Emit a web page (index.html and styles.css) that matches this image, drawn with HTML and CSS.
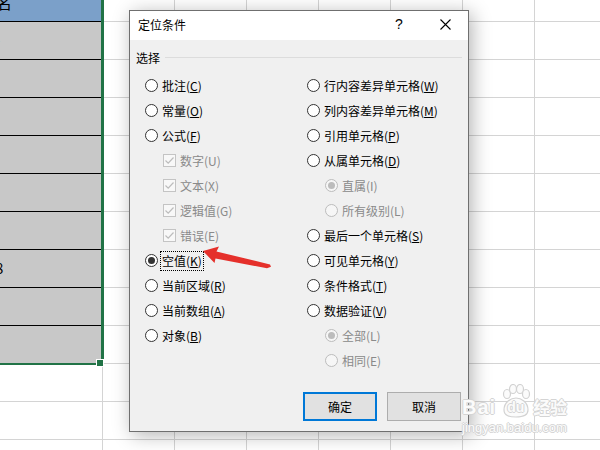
FILE: index.html
```html
<!DOCTYPE html>
<html lang="zh-CN">
<head>
    <meta charset="UTF-8">
    <title>定位条件</title>
    <link rel="stylesheet" href="styles.css">
</head>
<body>
    <div class="sheet">
        <div class="col-a">
            <div class="sel">
                <div class="a-head"><span>名</span></div>
                <div class="a-cell"><span>-</span></div>
                <div class="a-cell"></div>
                <div class="a-cell"></div>
                <div class="a-cell"></div>
                <div class="a-cell"></div>
                <div class="a-cell"></div>
                <div class="a-cell"><span>8</span></div>
                <div class="a-cell"></div>
                <div class="a-cell"></div>
            </div>
        </div>
        <div class="cols"></div>

        <div class="dialog">
            <div class="title-bar">
                <div class="title">定位条件</div>
                <div class="tb-btn help">?</div>
                <div class="tb-btn">
                    <svg width="11" height="11" viewBox="0 0 11 11"><path d="M0.5 0.5 L10.5 10.5 M10.5 0.5 L0.5 10.5" stroke="#000" stroke-width="1.1" fill="none"/></svg>
                </div>
            </div>
            <div class="body">
                <div class="group-head">选择</div>
                <div class="opts">
                    <div class="opt-col left">
                        <div class="opt"><i class="radio"></i><span>批注(<u>C</u>)</span></div>
                        <div class="opt"><i class="radio"></i><span>常量(<u>O</u>)</span></div>
                        <div class="opt"><i class="radio"></i><span>公式(<u>F</u>)</span></div>
                        <div class="opt sub off"><i class="check"><svg width="11" height="11" viewBox="0 0 11 11"><path d="M1.5 5.5 L4.2 8.2 L9.5 2.5" stroke="#bcbcbc" stroke-width="1.2" fill="none"/></svg></i><span>数字(U)</span></div>
                        <div class="opt sub off"><i class="check"><svg width="11" height="11" viewBox="0 0 11 11"><path d="M1.5 5.5 L4.2 8.2 L9.5 2.5" stroke="#bcbcbc" stroke-width="1.2" fill="none"/></svg></i><span>文本(X)</span></div>
                        <div class="opt sub off"><i class="check"><svg width="11" height="11" viewBox="0 0 11 11"><path d="M1.5 5.5 L4.2 8.2 L9.5 2.5" stroke="#bcbcbc" stroke-width="1.2" fill="none"/></svg></i><span>逻辑值(G)</span></div>
                        <div class="opt sub off"><i class="check"><svg width="11" height="11" viewBox="0 0 11 11"><path d="M1.5 5.5 L4.2 8.2 L9.5 2.5" stroke="#bcbcbc" stroke-width="1.2" fill="none"/></svg></i><span>错误(E)</span></div>
                        <div class="opt"><i class="radio on"></i><span class="focus">空值(<u>K</u>)</span></div>
                        <div class="opt"><i class="radio"></i><span>当前区域(<u>R</u>)</span></div>
                        <div class="opt"><i class="radio"></i><span>当前数组(<u>A</u>)</span></div>
                        <div class="opt"><i class="radio"></i><span>对象(<u>B</u>)</span></div>
                    </div>
                    <div class="opt-col">
                        <div class="opt"><i class="radio"></i><span>行内容差异单元格(<u>W</u>)</span></div>
                        <div class="opt"><i class="radio"></i><span>列内容差异单元格(<u>M</u>)</span></div>
                        <div class="opt"><i class="radio"></i><span>引用单元格(<u>P</u>)</span></div>
                        <div class="opt"><i class="radio"></i><span>从属单元格(<u>D</u>)</span></div>
                        <div class="opt sub off"><i class="radio on"></i><span>直属(I)</span></div>
                        <div class="opt sub off"><i class="radio"></i><span>所有级别(L)</span></div>
                        <div class="opt"><i class="radio"></i><span>最后一个单元格(<u>S</u>)</span></div>
                        <div class="opt"><i class="radio"></i><span>可见单元格(<u>Y</u>)</span></div>
                        <div class="opt"><i class="radio"></i><span>条件格式(<u>T</u>)</span></div>
                        <div class="opt"><i class="radio"></i><span>数据验证(<u>V</u>)</span></div>
                        <div class="opt sub off"><i class="radio on"></i><span>全部(L)</span></div>
                        <div class="opt sub off"><i class="radio"></i><span>相同(E)</span></div>
                    </div>
                </div>
                <div class="foot">
                    <div class="btn default">确定</div>
                    <div class="btn">取消</div>
                </div>
            </div>
        </div>

        <!-- annotation arrow -->
        <svg class="arrow" width="600" height="450" viewBox="0 0 600 450">
            <polygon points="203,251 219,246.5 216.5,251.5 270,264.5 271,266.8 267,268.2 215.5,258.5 214.5,263" fill="#e5302b"/>
        </svg>

        <div class="watermark">
            <div class="wm-row">
                <span class="wm-bai">Bai</span>
                <span class="wm-paw">
                    <svg width="34" height="34" viewBox="0 0 34 34">
                        <g fill="#fbfbfb" stroke="#d2d2d2" stroke-width="1.2">
                            <ellipse cx="8" cy="10" rx="3.5" ry="4.5"/>
                            <ellipse cx="14" cy="5" rx="3.5" ry="4.5"/>
                            <ellipse cx="21" cy="5" rx="3.5" ry="4.5"/>
                            <ellipse cx="27" cy="10" rx="3.5" ry="4.5"/>
                            <path d="M5 26 C5 18 12 14 17 14 C22 14 29 18 29 26 C29 32 23 33 17 33 C11 33 5 32 5 26 Z"/>
                        </g>
                    </svg>
                    <span class="wm-du">du</span>
                </span>
                <span class="wm-jy">经验</span>
            </div>
            <div class="wm-url">jingyan.baidu.com</div>
        </div>
    </div>
</body>
</html>
```

FILE: styles.css
```css
body {
    margin: 0;
    padding: 0;
    background-color: #fff;
    font-family: "Noto Sans CJK SC", "Liberation Sans", sans-serif;
}

.sheet {
    position: relative;
    width: 600px;
    height: 450px;
    display: flex;
    overflow: hidden;
}

/* spreadsheet grid */
.col-a {
    width: 104px;
    flex: none;
    background:
        linear-gradient(to right, transparent 102px, #d4d4d4 102px, #d4d4d4 103px, transparent 103px),
        linear-gradient(to bottom, transparent 21px, #d4d4d4 21px, #d4d4d4 22px, transparent 22px) 0 0 / 100% 38px,
        #fff;
}

.cols {
    flex: 1;
    background:
        linear-gradient(to right, transparent 70px, #d4d4d4 70px, #d4d4d4 71px, transparent 71px) 0 0 / 72px 100%,
        linear-gradient(to bottom, transparent 21px, #d4d4d4 21px, #d4d4d4 22px, transparent 22px) 0 0 / 100% 38px,
        #fff;
}

.sel {
    position: relative;
    width: 104px;
    box-sizing: border-box;
    background-color: #c8c8c8;
    border-right: 3px solid #217346;
    border-bottom: 2px solid #217346;
}

.sel::after {
    content: "";
    position: absolute;
    right: -3px;
    bottom: -4px;
    width: 6px;
    height: 6px;
    background-color: #217346;
    border: 1px solid #fff;
}

.a-head {
    height: 21px;
    background-color: #7ba0c9;
    overflow: hidden;
    font-size: 16px;
    line-height: 16px;
}

.a-head span {
    display: block;
    margin: -6px 0 0 -4px;
}

.a-cell {
    height: 38px;
    box-sizing: border-box;
    border-top: 1px solid #000;
    font-size: 15px;
    line-height: 36px;
    overflow: hidden;
}

.a-cell span {
    display: block;
    margin-left: -5px;
}

/* dialog */
.dialog {
    position: absolute;
    left: 129px;
    top: 10px;
    width: 340px;
    height: 422px;
    box-sizing: border-box;
    border: 1px solid #6f6f6f;
    background-color: #f0f0f0;
    display: flex;
    flex-direction: column;
    box-shadow: 3px 3px 18px rgba(0,0,0,0.3);
    font-size: 12px;
    line-height: 16px;
    color: #000;
}

.title-bar {
    height: 29px;
    background-color: #fff;
    display: flex;
    align-items: center;
}

.title {
    flex: 1;
    padding-left: 8px;
    margin-top: -2px;
}

.tb-btn {
    width: 46px;
    height: 29px;
    display: flex;
    align-items: center;
    justify-content: center;
    margin-top: -3px;
}

.tb-btn.help {
    font-family: "Liberation Sans", sans-serif;
    font-size: 14px;
}

.body {
    flex: 1;
    display: flex;
    flex-direction: column;
    padding: 10px 6px 10px 6px;
}

.group-head {
    display: flex;
    align-items: center;
    gap: 5px;
}

.group-head::after {
    content: "";
    flex: 1;
    border-top: 1px solid #dcdcdc;
    margin-top: -1px;
}

.opts {
    display: flex;
    margin-top: 7px;
    padding-left: 9px;
}

.opt-col.left {
    width: 162px;
}

.opt {
    height: 25px;
    display: flex;
    align-items: center;
    white-space: nowrap;
}

.opt.sub {
    padding-left: 18px;
}

.opt.off {
    color: #8a8a8a;
}

.radio {
    width: 13px;
    height: 13px;
    box-sizing: border-box;
    border: 1px solid #333;
    border-radius: 50%;
    background-color: #fff;
    margin-right: 4px;
    flex: none;
    display: flex;
    align-items: center;
    justify-content: center;
}

.radio.on::after {
    content: "";
    width: 7px;
    height: 7px;
    border-radius: 50%;
    background-color: #333;
}

.off .radio {
    border-color: #bcbcbc;
    background-color: #f6f6f6;
}

.off .radio.on::after {
    background-color: #bcbcbc;
}

.check {
    width: 13px;
    height: 13px;
    box-sizing: border-box;
    border: 1px solid #c4c4c4;
    background-color: #f8f8f8;
    margin-right: 4px;
    flex: none;
    display: flex;
    align-items: center;
    justify-content: center;
}

.focus {
    outline: 1px dotted #000;
    outline-offset: 1px;
}

.foot {
    margin-top: auto;
    display: flex;
    justify-content: flex-end;
    gap: 10px;
    padding-right: 1px;
}

.btn {
    width: 74px;
    height: 29px;
    box-sizing: border-box;
    border: 1px solid #adadad;
    background-color: #e1e1e1;
    display: flex;
    align-items: center;
    justify-content: center;
}

.btn.default {
    border: 2px solid #0078d7;
}

/* overlays */
.arrow {
    position: absolute;
    left: 0;
    top: 0;
    pointer-events: none;
}

.watermark {
    position: absolute;
    left: 462px;
    top: 384px;
    color: #fbfbfb;
    font-family: "Liberation Sans", "Noto Sans CJK SC", sans-serif;
    text-shadow: 1px 0 #d4d4d4, -1px 0 #d4d4d4, 0 1px #d4d4d4, 0 -1px #d4d4d4;
}

.wm-row {
    display: flex;
    align-items: flex-end;
    height: 34px;
}

.wm-bai {
    font-size: 20px;
    font-weight: bold;
    line-height: 22px;
    letter-spacing: 1px;
}

.wm-paw {
    position: relative;
    width: 34px;
    height: 34px;
    margin-left: 3px;
}

.wm-du {
    position: absolute;
    left: 8px;
    top: 15px;
    font-size: 14px;
    font-weight: bold;
    line-height: 16px;
}

.wm-jy {
    font-family: "Noto Sans CJK SC", sans-serif;
    font-size: 17px;
    font-weight: bold;
    line-height: 22px;
}

.wm-url {
    font-size: 13px;
    line-height: 16px;
    margin-top: 2px;
}
```
